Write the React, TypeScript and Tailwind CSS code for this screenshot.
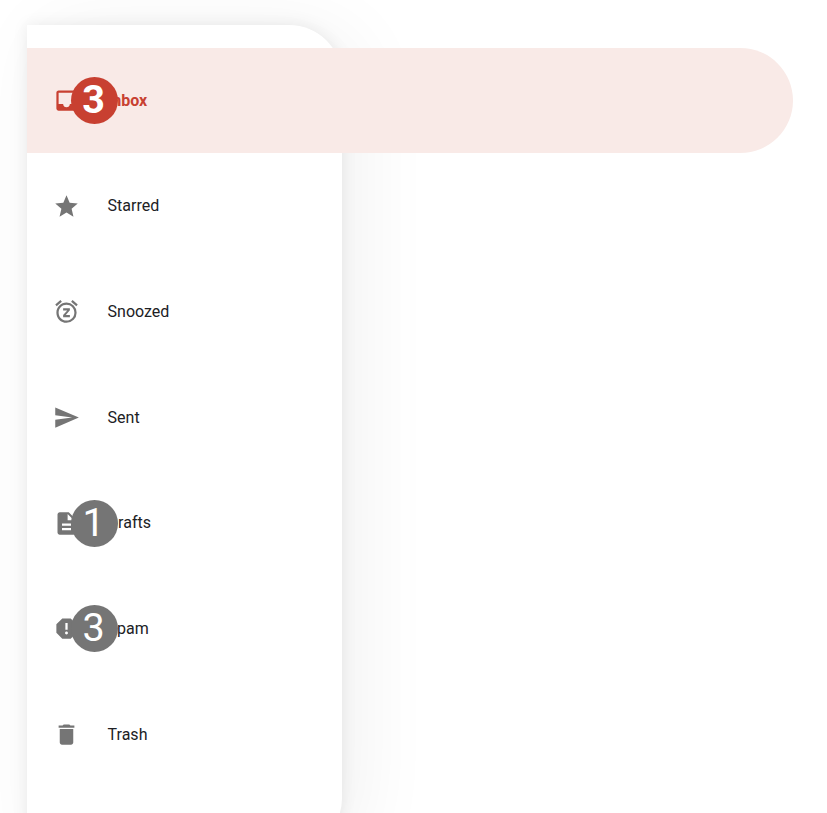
import React from 'react';
import { MdInbox, MdStar, MdSnooze, MdSend, MdDescription, MdReport, MdDelete } from 'react-icons/md';
import type { IconType } from 'react-icons';

type Item = { label: string; Icon: IconType; count?: number; active?: boolean };

const items: Item[] = [
  { label: 'Inbox', Icon: MdInbox, count: 3, active: true },
  { label: 'Starred', Icon: MdStar },
  { label: 'Snoozed', Icon: MdSnooze },
  { label: 'Sent', Icon: MdSend },
  { label: 'Drafts', Icon: MdDescription, count: 1 },
  { label: 'Spam', Icon: MdReport, count: 3 },
  { label: 'Trash', Icon: MdDelete },
];

function Row({ label, Icon, count, active }: Item) {
  return (
    <li
      className={
        'flex h-[105.7px] w-[766px] shrink-0 items-center rounded-r-full pl-[26px] ' +
        (active ? 'bg-[#f9eae7] font-bold text-[#c84031]' : 'text-[#202124]')
      }
    >
      <span className={'relative mr-[27.6px] mb-[0.4px] size-[27px] ' + (active ? '' : 'text-[#757575]')}>
        <Icon className="size-full" />
        {count !== undefined && (
          <span
            className={
              'absolute top-[-10.1px] left-[17.7px] flex size-[47px] items-center justify-center rounded-full text-[39.6px] leading-none text-white ' +
              (active ? 'bg-[#c84031]' : 'bg-[#757575]')
            }
          >
            <span className="pr-[1px] pb-[1.2px]">{count}</span>
          </span>
        )}
      </span>
      <span className="text-base">{label}</span>
    </li>
  );
}

export default function App() {
  return (
    <div className="h-[813px] w-full overflow-hidden bg-white pt-[25px] pl-[27px] font-[Roboto,sans-serif]">
      <nav className="h-[826px] w-[315px] rounded-r-[52.8px] bg-white pt-[22.75px] shadow-[0_0_16px_rgba(0,0,0,0.08),16px_6px_80px_rgba(0,0,0,0.06)]">
        <ul className="flex flex-col">
          {items.map((item) => (
            <Row key={item.label} {...item} />
          ))}
        </ul>
      </nav>
    </div>
  );
}
